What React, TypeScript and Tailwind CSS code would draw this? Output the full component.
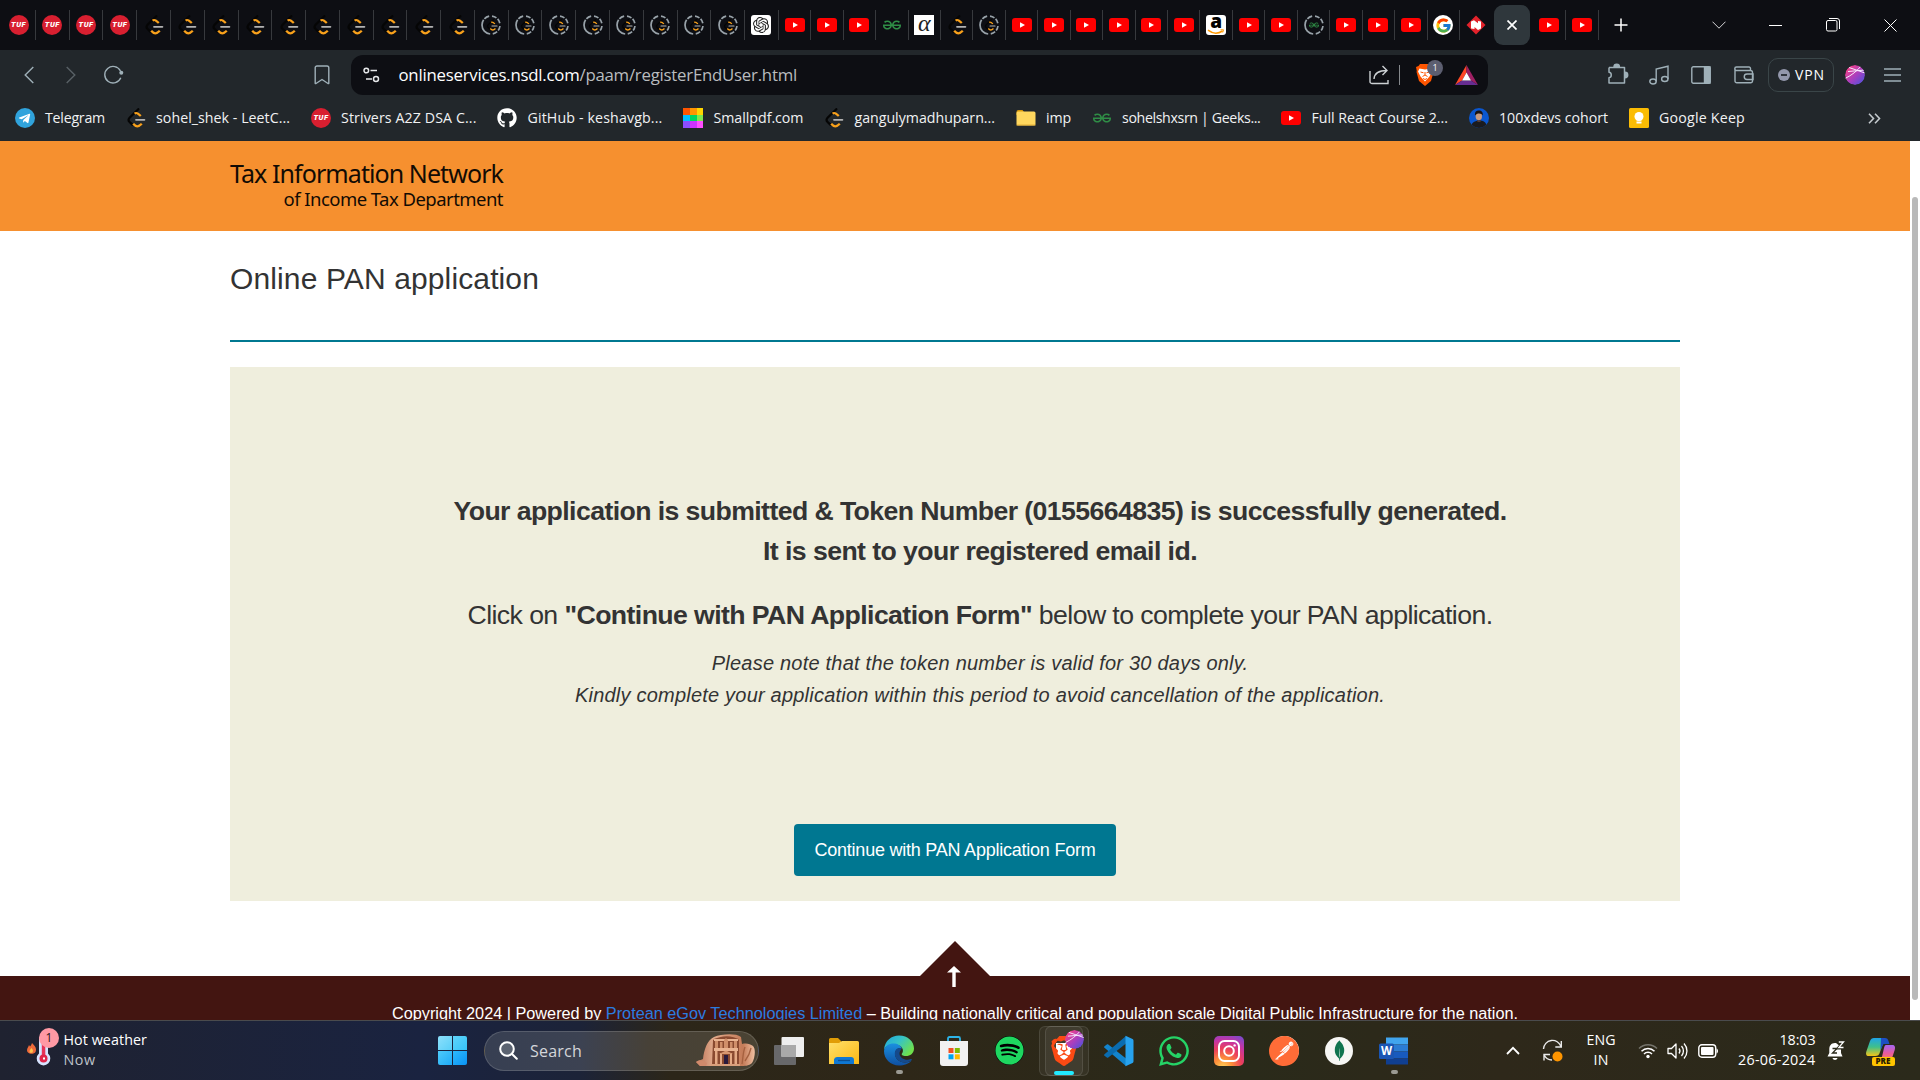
import React, { useLayoutEffect, useRef, useState } from "react";
import { SiBrave, SiGeeksforgeeks, SiMongodb, SiOpenai, SiPostman } from "react-icons/si";
import { FaGithub, FaSpotify, FaTelegramPlane, FaWhatsapp } from "react-icons/fa";
import { FcGoogle } from "react-icons/fc";

/* One line of text whose tracking is adjusted so that it spans `width` pixels. */
function Fit({ width, className = "", children }: { width: number; className?: string; children: React.ReactNode }) {
  const ref = useRef<HTMLSpanElement>(null);
  const [spacing, setSpacing] = useState(0);
  useLayoutEffect(() => {
    const el = ref.current;
    if (!el) return;
    const previous = el.style.letterSpacing;
    el.style.letterSpacing = "0px";
    const natural = el.getBoundingClientRect().width;
    el.style.letterSpacing = previous;
    setSpacing((width - natural) / (el.textContent || " ").length);
  }, [width]);
  return (
    <span ref={ref} className={`inline-block shrink-0 whitespace-nowrap ${className}`} style={{ letterSpacing: spacing }}>
      {children}
    </span>
  );
}

/* ---------- site icons ---------- */

function LeetCode({ size = 20 }: { size?: number }) {
  return (
    <svg width={size} height={size} viewBox="0 0 20 20" fill="none" strokeLinecap="round" className="shrink-0">
      <path d="M12.300 1.200 3.600 9.800c-1.400 1.400-1.400 2.800 0 4.200L6.300 16.600" stroke="#050505" strokeWidth="2.300" />
      <path d="M8.600 5.600c1.900-1.500 3.300-.6 6.200 2.500" stroke="#f9a11b" strokeWidth="2.200" strokeLinecap="butt" />
      <path d="M7.200 15.800c2.800 3.400 5.400 3.200 8.600 0" stroke="#f9a11b" strokeWidth="2.300" strokeLinecap="butt" />
      <path d="M10 11.800h8.400" stroke="#b3b3b3" strokeWidth="1.800" />
    </svg>
  );
}

function Tuf() {
  return (
    <span className="flex size-5 shrink-0 items-center justify-center rounded-full bg-[#d81f30] font-['Roboto',sans-serif] text-[7.500px] leading-none font-black tracking-[0.6px] text-white italic">
      TUF
    </span>
  );
}

function YouTube() {
  return (
    <svg width="20" height="20" viewBox="0 0 20 20" className="shrink-0">
      <rect x="0" y="3" width="20" height="14" rx="3" fill="#f00" />
      <path d="M8 7.200v5.600l5-2.800z" fill="#fff" />
    </svg>
  );
}

function Ring({ children }: { children: React.ReactNode }) {
  return (
    <span className="relative flex size-5 shrink-0 items-center justify-center">
      <svg width="20" height="20" viewBox="0 0 20 20" fill="none" stroke="#98a2a9" strokeWidth="1.700" className="absolute inset-0">
        <path d="M9.200 19A9 9 0 0 1 1 10" />
        <path d="M1 10A9 9 0 0 1 9.200 1" strokeDasharray="5.500 1.200" />
        <path d="M11 1.050A9 9 0 0 1 18.950 9" strokeDasharray="4.800 1.500" />
        <path d="M18.950 11A9 9 0 0 1 11 18.950" strokeDasharray="4.800 1.500" />
      </svg>
      {children}
    </span>
  );
}

function Gfg({ size = 18 }: { size?: number }) {
  return <SiGeeksforgeeks size={size} color="#2f8d46" className="shrink-0" />;
}

function ChatGpt() {
  return (
    <span className="flex size-5 shrink-0 items-center justify-center rounded-[3px] bg-white">
      <SiOpenai size={16} color="#222" />
    </span>
  );
}

function Alpha() {
  return (
    <span className="flex size-5 shrink-0 items-center justify-center bg-white pb-1 font-['Liberation_Serif',serif] text-[24px] leading-none text-[#222] italic">
      α
    </span>
  );
}

function Amazon() {
  return (
    <span className="relative flex size-5 shrink-0 justify-center rounded-[3px] bg-white">
      <span className="mt-[-3px] font-['Open_Sans',sans-serif] text-[19px] leading-[19px] font-extrabold text-black">a</span>
      <svg width="18" height="6" viewBox="0 0 18 6" fill="none" className="absolute bottom-0 left-px">
        <path d="M1 1.200c5 3.800 10 3.700 14.500.8" stroke="#f90" strokeWidth="1.500" />
        <path d="M13.500.8h3l-.8 2.700" stroke="#f90" strokeWidth="1" />
      </svg>
    </span>
  );
}

function Google() {
  return (
    <span className="flex size-5 shrink-0 items-center justify-center rounded-full bg-white">
      <FcGoogle size={17} />
    </span>
  );
}

function Nsdl() {
  return (
    <svg width="20" height="20" viewBox="0 0 20 20" className="shrink-0">
      <path d="M10 .5 19.500 10 10 19.500.5 10z" fill="#e3222b" />
      <path d="M5 6.500 8 5.200l4 3V6l3 .5v7L12 15l-3.500-3v2L5 13.500z" fill="#fff" />
    </svg>
  );
}

function Smallpdf() {
  const colors = ["bg-[#ff5500]", "bg-[#ff9500]", "bg-[#ffd500]", "bg-[#00bfff]", "bg-[#00d563]", "bg-[#80e64d]", "bg-[#8c4dff]", "bg-[#cc33ff]", "bg-[#ff4dff]"];
  return (
    <span className="grid size-5 shrink-0 grid-cols-3 grid-rows-3">
      {colors.map((c) => (
        <span key={c} className={c} />
      ))}
    </span>
  );
}

function Folder() {
  return (
    <svg width="20" height="20" viewBox="0 0 20 20" className="shrink-0">
      <path d="M.5 4A2 2 0 0 1 2.500 2h4l1.500 2v3H.5z" fill="#d99a0c" />
      <rect x=".5" y="3.500" width="19" height="14" rx="1.500" fill="#ffd75e" />
      <path d="M.5 17h19" stroke="#e2ae36" />
    </svg>
  );
}

function Avatar() {
  return (
    <svg width="20" height="20" viewBox="0 0 20 20" className="shrink-0">
      <clipPath id="avatar">
        <circle cx="10" cy="10" r="10" />
      </clipPath>
      <g clipPath="url(#avatar)">
        <rect width="20" height="20" fill="#0b57d0" />
        <path d="M2 20c0-5 3-7 8-7.500S18 15 18 20z" fill="#1b1b1f" />
        <ellipse cx="9.800" cy="8" rx="3.200" ry="4.300" fill="#c79a80" />
        <path d="M6 7.500C5.500 3.500 7.500 2.500 10 2.500s4.300 1.500 3.700 5c-1-2.500-5.500-3-7.700 0z" fill="#1a1312" />
        <path d="M8 11.500c1 1.500 3 1.500 4 0l-.5 2.500h-3z" fill="#5b3c30" />
      </g>
    </svg>
  );
}

function Keep() {
  return (
    <svg width="20" height="20" viewBox="0 0 20 20" className="shrink-0">
      <rect width="20" height="20" rx="1.500" fill="#fbbc04" />
      <circle cx="10" cy="8.500" r="4.500" fill="#fff" />
      <path d="M7.500 10h5v2.500h-5zM7.500 13.500h5v2h-5z" fill="#fff" />
    </svg>
  );
}

function Globe({ size = 20 }: { size?: number }) {
  return (
    <svg width={size} height={size} viewBox="0 0 20 20" className="shrink-0">
      <defs>
        <linearGradient id="globe" x1="0" y1="0" x2="1" y2="1">
          <stop offset=".15" stopColor="#f0418c" />
          <stop offset=".55" stopColor="#a63fc0" />
          <stop offset="1" stopColor="#3d55e0" />
        </linearGradient>
        <clipPath id="globeClip">
          <circle cx="10" cy="10" r="10" />
        </clipPath>
      </defs>
      <g clipPath="url(#globeClip)">
        <circle cx="10" cy="10" r="10" fill="url(#globe)" />
        <path d="M4 2.500 20 8M0 13.500C7 10 12 6 16 1M3 6.500 20 5" stroke="#f7e9ff" strokeWidth="1" fill="none" />
      </g>
    </svg>
  );
}

/* ---------- tab strip ---------- */

type SiteKey = "tuf" | "lc" | "lcr" | "gpt" | "yt" | "gfg" | "alpha" | "amazon" | "gfgr" | "google";

function Site({ kind }: { kind: SiteKey }) {
  switch (kind) {
    case "tuf":
      return <Tuf />;
    case "lc":
      return <LeetCode />;
    case "lcr":
      return (
        <Ring>
          <span className="pl-0.5">
            <LeetCode size={12} />
          </span>
        </Ring>
      );
    case "gpt":
      return <ChatGpt />;
    case "yt":
      return <YouTube />;
    case "gfg":
      return <Gfg />;
    case "alpha":
      return <Alpha />;
    case "amazon":
      return <Amazon />;
    case "gfgr":
      return (
        <Ring>
          <Gfg size={10} />
        </Ring>
      );
    case "google":
      return <Google />;
  }
}

const wideTabs: SiteKey[] = [
  "tuf", "tuf", "tuf", "tuf",
  "lc", "lc", "lc", "lc", "lc", "lc", "lc", "lc", "lc", "lc",
  "lcr", "lcr", "lcr", "lcr", "lcr", "lcr", "lcr", "lcr", "gpt",
];
const narrowTabs: SiteKey[] = [
  "yt", "yt", "yt", "gfg", "alpha", "lc", "lcr", "yt", "yt", "yt", "yt", "yt", "yt",
  "amazon", "yt", "yt", "gfgr", "yt", "yt", "yt", "google",
];

function TabStrip() {
  return (
    <div className="flex h-[50px] items-center bg-[#0d0e13] pl-[2.200px]">
      {wideTabs.map((k, i) => (
        <div key={i} className="flex h-[30px] w-[33.770px] shrink-0 items-center justify-center border-r border-[#37393d]">
          <Site kind={k} />
        </div>
      ))}
      {narrowTabs.map((k, i) => (
        <div key={i} className="flex h-[30px] w-[32.450px] shrink-0 items-center justify-center border-r border-[#37393d]">
          <Site kind={k} />
        </div>
      ))}
      <div className="flex w-[34.200px] shrink-0 justify-center pr-[3px]">
        <Nsdl />
      </div>
      <div className="flex h-10 w-9 shrink-0 items-center justify-center rounded-[9px] bg-[#2f373c]">
        <svg width="10" height="10" viewBox="0 0 10 10" stroke="#fff" strokeWidth="1.700">
          <path d="M.5.5l9 9M9.500.5l-9 9" />
        </svg>
      </div>
      <div className="ml-[2.500px] flex h-[30px] w-[33px] shrink-0 items-center justify-center border-r border-[#37393d]">
        <YouTube />
      </div>
      <div className="flex h-[30px] w-[33px] shrink-0 items-center justify-center border-r border-[#37393d]">
        <YouTube />
      </div>
      <svg width="14" height="14" viewBox="0 0 14 14" stroke="#fff" strokeWidth="1.500" className="ml-[15px] shrink-0">
        <path d="M7 .5v13M.5 7h13" />
      </svg>
      <div className="ml-[62.800px] flex items-center">
        <div className="flex w-[57px] justify-center">
          <svg width="14" height="8" viewBox="0 0 14 8" fill="none" stroke="#d5d5d7">
            <path d="M.5.7 7 7.200 13.500.7" />
          </svg>
        </div>
        <div className="flex w-[57px] justify-center">
          <span className="h-px w-[13px] bg-white" />
        </div>
        <div className="flex w-[57px] justify-center">
          <svg width="14" height="14" viewBox="0 0 14 14" fill="none" stroke="#fff">
            <rect x=".5" y="2.500" width="10.500" height="10.500" rx="1.500" />
            <path d="M3 .5h8a2.500 2.500 0 0 1 2.500 2.500v8" />
          </svg>
        </div>
        <div className="flex w-[59px] justify-center">
          <svg width="13" height="13" viewBox="0 0 13 13" stroke="#fff">
            <path d="M.5.5l12 12M12.500.5l-12 12" />
          </svg>
        </div>
      </div>
    </div>
  );
}

/* ---------- toolbar ---------- */

function Toolbar() {
  return (
    <div className="flex h-[50px] items-center text-[#9fb0b8]">
      <div className="flex w-[58px] shrink-0 justify-center">
        <svg width="10" height="18" viewBox="0 0 10 18" fill="none" stroke="currentColor" strokeWidth="1.400">
          <path d="M9.300 1 1.200 9l8.100 8" />
        </svg>
      </div>
      <div className="flex w-[26px] shrink-0 justify-center text-[#596166]">
        <svg width="10" height="18" viewBox="0 0 10 18" fill="none" stroke="currentColor" strokeWidth="1.400">
          <path d="M.7 1l8.100 8-8.100 8" />
        </svg>
      </div>
      <div className="flex w-[58px] shrink-0 justify-center pl-px">
        <svg width="20" height="20" viewBox="0 0 20 20" fill="none" stroke="currentColor" strokeWidth="1.400">
          <path d="M16.800 12.800A8.300 8.300 0 1 1 16.500 6" />
          <circle cx="17.300" cy="7.800" r="2" fill="currentColor" stroke="none" />
        </svg>
      </div>
      <div className="ml-40 flex w-10 shrink-0 justify-center">
        <svg width="16" height="20" viewBox="0 0 16 20" fill="none" stroke="currentColor" strokeWidth="1.400" strokeLinejoin="round">
          <path d="M3 1h10a1.800 1.800 0 0 1 1.800 1.800V18.200c0 .5-.4.600-.8.300L8 14.500l-6 4c-.4.300-.8.200-.8-.3V2.800A1.800 1.800 0 0 1 3 1z" />
        </svg>
      </div>
      <div className="ml-[9px] flex h-10 w-[1137px] shrink-0 items-center rounded-xl bg-[#0d0e13]">
        <svg width="17" height="16" viewBox="0 0 17 16" fill="none" stroke="#e6e8ea" strokeWidth="1.500" className="ml-3 shrink-0">
          <circle cx="3.300" cy="3.500" r="2.300" />
          <path d="M7.500 3.500H14M3 12h6" />
          <circle cx="13" cy="12" r="2.500" />
        </svg>
        <Fit width={398.500} className="ml-[18.500px] pb-px font-['Open_Sans',sans-serif] text-[16.800px] leading-6 text-[#b9bcbf]">
          <span className="text-white">onlineservices.nsdl.com</span>/paam/registerEndUser.html
        </Fit>
        <svg width="20" height="20" viewBox="0 0 20 20" fill="none" stroke="#cdd1d4" strokeWidth="1.400" className="ml-auto shrink-0">
          <path d="M1 6v10.500A1.800 1.800 0 0 0 2.800 18.500H19V15" />
          <path d="M5 14c.3-5.500 4-8.500 13-8.500M13.500 1 18 5.500 13.500 10" />
        </svg>
        <span className="ml-[10px] h-5 w-px bg-[#85888c]" />
        <span className="relative ml-[15px] flex h-[22px] w-5 items-center justify-center">
          <svg width="20" height="22" viewBox="0 0 20 22" className="absolute inset-0">
            <path d="M5 0h10l1.500 2 2.500 1-.8 4 .3 1-2.500 9L10 22l-6-5L1.500 8l.3-1L1 3l2.500-1z" fill="#ff5500" />
            <path d="M4.500 4.500 10 5.500l5.500-1 1.500 3-2.500 5-4.500 5-4.500-5-2.500-5z" fill="#fff" />
            <path d="M5.500 8l3 .8M14.500 8l-3 .8M7.500 12.500 10 11l2.500 1.500M10 8v3M8 14.500l2 1 2-1" stroke="#ff5500" strokeWidth="1" fill="none" />
          </svg>
          <span className="absolute -top-[4px] left-[12px] flex h-4 w-4 items-center justify-center rounded-full bg-[#5c5e70] font-['Open_Sans',sans-serif] text-[9px] text-white">1</span>
        </span>
        <svg width="23" height="20" viewBox="0 0 23 20" className="mr-[10px] ml-5 shrink-0">
          <path d="M11.500 0 0 20l7-4.500 4.500-8z" fill="#ff4724" />
          <path d="M11.500 0 23 20l-7-4.500-4.500-8z" fill="#9e1f63" />
          <path d="M0 20h23l-7-4.500H7z" fill="#662d91" />
          <path d="M11.500 7.500 7 15.500h9z" fill="#fff" />
        </svg>
      </div>
      <div className="ml-[109px] flex w-[42px] shrink-0 justify-center">
        <svg width="22" height="22" viewBox="0 0 22 22" fill="none" stroke="currentColor" strokeWidth="1.500" className="relative -top-px">
          <path d="M2 4.500h15.500V9.300M17.500 14.700V20H2v-5.300c3-.3 3-5.100 0-5.400V4.500M17.500 9v6" strokeLinejoin="round" />
          <path d="M7 4a2.700 2.700 0 0 1 5.400 0zM18 9.300a2.700 2.700 0 0 1 0 5.400z" fill="currentColor" />
        </svg>
      </div>
      <div className="flex w-[41px] shrink-0 justify-center pr-px">
        <svg width="20" height="20" viewBox="0 0 20 20" fill="none" stroke="currentColor" strokeWidth="1.400">
          <ellipse cx="4" cy="16.500" rx="3.200" ry="2.500" />
          <ellipse cx="15.800" cy="14" rx="3.200" ry="2.500" />
          <path d="M7.200 16.500V4L19 1.200V14" />
        </svg>
      </div>
      <div className="flex w-[43px] shrink-0 justify-center pr-px">
        <svg width="20" height="18" viewBox="0 0 20 18" fill="none" stroke="currentColor" strokeWidth="1.400">
          <rect x=".8" y=".8" width="18.400" height="16.400" rx="1.500" />
          <path d="M13.500 1h5.500v16h-5.500z" fill="currentColor" />
        </svg>
      </div>
      <div className="flex w-[42px] shrink-0 justify-center">
        <svg width="20" height="18" viewBox="0 0 20 18" fill="none" stroke="currentColor" strokeWidth="1.400">
          <path d="M16.500 4.500V2.500A1.500 1.500 0 0 0 15 1H2.500a1.600 1.600 0 0 0 0 3.500h14A2 2 0 0 1 18.500 6.500v8.500a1.800 1.800 0 0 1-1.800 1.800H2.800A1.800 1.800 0 0 1 1 15V2.500" />
          <path d="M19 8h-6a2.500 2.500 0 0 0 0 5.500h6z" />
        </svg>
      </div>
      <div className="ml-[3px] flex h-[34px] w-[66px] shrink-0 items-center rounded-[10px] border border-[#3a4548] pl-[9px] text-white">
        <span className="flex size-3 items-center justify-center rounded-full bg-[#9397ab]">
          <span className="h-[2px] w-[6px] bg-[#30343c]" />
        </span>
        <Fit width={30} className="ml-[5px] font-['Open_Sans',sans-serif] text-[14px] leading-5">
          VPN
        </Fit>
      </div>
      <div className="flex w-[42px] shrink-0 justify-center">
        <Globe />
      </div>
      <div className="flex w-8 shrink-0 justify-center">
        <svg width="17" height="14" viewBox="0 0 17 14" stroke="currentColor" strokeWidth="1.300">
          <path d="M0 1h17M0 7h17M0 13h17" />
        </svg>
      </div>
    </div>
  );
}

const bookmarks: { icon: React.ReactNode; label: string; width: number }[] = [
  { icon: <span className="flex size-5 shrink-0 items-center justify-center rounded-full bg-[#30a3dc] pr-0.5"><FaTelegramPlane size={13} color="#fff" /></span>, label: "Telegram", width: 60 },
  { icon: <LeetCode />, label: "sohel_shek - LeetC...", width: 134 },
  { icon: <Tuf />, label: "Strivers A2Z DSA C...", width: 135.500 },
  { icon: <FaGithub size={20} color="#fff" className="shrink-0" />, label: "GitHub - keshavgb...", width: 135 },
  { icon: <Smallpdf />, label: "Smallpdf.com", width: 90 },
  { icon: <LeetCode />, label: "gangulymadhuparn...", width: 140.500 },
  { icon: <Folder />, label: "imp", width: 25 },
  { icon: <Gfg size={18} />, label: "sohelshxsrn | Geeks...", width: 138.500 },
  { icon: <YouTube />, label: "Full React Course 2...", width: 136.500 },
  { icon: <Avatar />, label: "100xdevs cohort", width: 109 },
  { icon: <Keep />, label: "Google Keep", width: 86 },
];

function BookmarksBar() {
  return (
    <div className="flex h-[41px] items-center gap-[21px] pb-[5px] pl-[15px]">
      {bookmarks.map((b) => (
        <div key={b.label} className="flex shrink-0 items-center gap-[10px]">
          <span className="flex w-5 justify-center">{b.icon}</span>
          <Fit width={b.width} className="font-['Open_Sans',sans-serif] text-[14.200px] leading-5 text-[#f1f2f3]">
            {b.label}
          </Fit>
        </div>
      ))}
      <svg width="13" height="11" viewBox="0 0 13 11" fill="none" stroke="#c3c9cd" strokeWidth="1.600" className="mr-[39px] ml-auto">
        <path d="M1 .8 5.500 5.500 1 10.200M7 .8l4.500 4.700L7 10.200" />
      </svg>
    </div>
  );
}

/* ---------- web page ---------- */

function Page() {
  return (
    <div className="flex h-[879px] overflow-hidden bg-white font-['Liberation_Sans',Arial,sans-serif] text-[#333]">
      <div className="w-[1910px] shrink-0">
        <header className="flex h-[90px] flex-col bg-[#f6902f] pt-[17px] pl-[230px] font-['Noto_Sans',sans-serif] text-[#120b04]">
          <div className="flex w-[273px] flex-col items-end">
            <Fit width={273} className="text-[25px] leading-[30px]">Tax Information Network</Fit>
            <Fit width={219.500} className="text-[18.500px] leading-[22px]">of Income Tax Department</Fit>
          </div>
        </header>
        <main className="mx-[230px]">
          <h1 className="h-[109px] pt-[29px] text-[30px] leading-[38px]">
            <Fit width={309}>Online PAN application</Fit>
          </h1>
          <div className="h-0.5 bg-[#007891]" />
          <section className="mt-[25px] flex h-[534px] flex-col items-center bg-[#efeedd]">
            <div className="ml-[50px] flex flex-col items-center pt-[124px]">
              <p className="flex flex-col items-center text-[26.670px] leading-10 font-bold">
                <Fit width={1053}>Your application is submitted &amp; Token Number (0155664835) is successfully generated.</Fit>
                <Fit width={434}>It is sent to your registered email id.</Fit>
              </p>
              <p className="mt-6 text-[26.670px] leading-10">
                <Fit width={1025}>
                  Click on <b>"Continue with PAN Application Form"</b> below to complete your PAN application.
                </Fit>
              </p>
              <p className="mt-3 flex flex-col items-center text-[20px] leading-8 italic">
                <Fit width={536.500}>Please note that the token number is valid for 30 days only.</Fit>
                <Fit width={810}>Kindly complete your application within this period to avoid cancellation of the application.</Fit>
              </p>
            </div>
            <button className="mt-auto mb-[25px] flex h-[52px] w-[322px] items-center justify-center rounded-[4px] bg-[#007791] text-[18px] text-white">
              <Fit width={281}>Continue with PAN Application Form</Fit>
            </button>
          </section>
        </main>
        <div className="mt-10 flex h-[35px] justify-center">
          <svg width="70" height="35" viewBox="0 0 70 35">
            <path d="M35 0 70 35H0z" fill="#431511" />
          </svg>
        </div>
        <footer className="flex h-40 flex-col items-center bg-[#431511] text-[16.300px] leading-6 text-white">
          <svg width="14" height="21" viewBox="0 0 14 21" className="relative -top-[10px] right-px shrink-0">
            <path d="M7 0 14 6.500H8.700V21H5.300V6.500H0z" fill="#fff" />
          </svg>
          <Fit width={1126} className="mt-[4px]">
            Copyright 2024 | Powered by <span className="text-[#2b7de0]">Protean eGov Technologies Limited</span> – Building nationally critical and population scale Digital Public Infrastructure for the nation.
          </Fit>
        </footer>
      </div>
      <div className="flex w-[10px] justify-center bg-white pt-14">
        <div className="h-[803px] w-[6px] rounded-full bg-[#b9b9b9]" />
      </div>
    </div>
  );
}

/* ---------- taskbar ---------- */

function Petra() {
  return (
    <svg width="60" height="34" viewBox="0 0 60 34" className="shrink-0">
      <defs>
        <linearGradient id="rock" x1="0" x2="1">
          <stop offset="0" stopColor="#b86f53" />
          <stop offset=".3" stopColor="#e2ab8c" />
          <stop offset=".8" stopColor="#c47b58" />
          <stop offset="1" stopColor="#f0c0a2" />
        </linearGradient>
      </defs>
      <path d="M0 28l7-3C8 16 11 6 18 3c7-3 22-4 27 0l1 7c5-1 8 0 11 2 3 3 2 12-1 17-3 3-8 3-11 3H4z" fill="url(#rock)" />
      <path d="M17 6c8-5 20-5 26 0v25H16z" fill="#8a4a30" />
      <path d="M18 5h24v2H18zM18 14h24v3H18z" fill="#e9b390" />
      <path d="M19 7h3v7h-3zM38 7h3v7h-3zM24 8h2.500v6H24zM34 8h2.500v6H34zM28 6l2-2 2 2v8h-4z" fill="#d08f6a" />
      <path d="M19 17h2.500v13H19zM24 19h2v11h-2zM34 19h2v11h-2zM38.500 17H41v13h-2.500z" fill="#e4aa85" />
      <path d="M28 21h4v9h-4z" fill="#2a1b3d" />
      <path d="M23 20l7-3.500L37 20z" fill="#d7966f" />
      <path d="M15 30h29v2H15z" fill="#d9a07c" />
      <path d="M49 13c-2 5-2 11-3 17M55 14c-1 5-3 9-6 13" stroke="#a5603f" strokeWidth="1.300" fill="none" />
      <path d="M0 28c3-3 7-2 11 1l-1 3H4z" fill="#d08a6c" />
    </svg>
  );
}

function Edge() {
  return (
    <svg width="30" height="31" viewBox="0 0 30 30" className="shrink-0">
      <defs>
        <linearGradient id="edgeTop" x1="0" y1="0" x2="1" y2=".6">
          <stop offset="0" stopColor="#1fa5dd" />
          <stop offset=".5" stopColor="#36c3c6" />
          <stop offset="1" stopColor="#6fe04c" />
        </linearGradient>
        <linearGradient id="edgeLeft" x1="0" y1="0" x2="0" y2="1">
          <stop offset="0" stopColor="#1a8fe0" />
          <stop offset="1" stopColor="#0f4fa0" />
        </linearGradient>
      </defs>
      <path d="M0 14C1 5 7.500 0 15 0c9 0 15 6 15 13 0 5-4 7.500-8 7.500-3.500 0-5-1.200-4-2.500 2-2.500 1-7-4-8.500C9 8 3 9 0 14z" fill="url(#edgeTop)" />
      <path d="M0 15.500C.5 10.500 5 8 9.500 8c4 0 7.500 2 8.500 5-3-1-6.500.5-7 4.500-.5 5 4 9.500 10 9.500 3 0 5-1 6.500-2C25 28.500 20 30 15 30 6.500 30 0 23.500 0 15.500z" fill="url(#edgeLeft)" />
      <path d="M18 13c-3.500-1.500-7 .5-7.200 4.500C10.500 23 15 27 21 27c2.500 0 5.500-1 6.500-2.200.6-1 .2-1.600-.8-1.200C22 25.500 16 23 15.500 18.500c-.2-2 1-4 2.500-5.500z" fill="#154a8c" />
    </svg>
  );
}

function Store() {
  return (
    <svg width="30" height="32" viewBox="0 0 30 32" className="shrink-0">
      <path d="M9 8V3.500C9 2.500 9.500 2 10.500 2h9c1 0 1.500.5 1.500 1.500V8" fill="none" stroke="#2db4e8" strokeWidth="1.800" />
      <path d="M1 6h28v22a3 3 0 0 1-3 3H4a3 3 0 0 1-3-3z" fill="#f1f1f1" />
      <path d="M9.500 13h5v5h-5z" fill="#f25022" />
      <path d="M15.800 13h5v5h-5z" fill="#7fba00" />
      <path d="M9.500 19.300h5v5h-5z" fill="#00a4ef" />
      <path d="M15.800 19.300h5v5h-5z" fill="#ffb900" />
    </svg>
  );
}

function BraveApp() {
  return (
    <span className="relative flex h-8 w-8 items-center justify-center">
      <span className="absolute top-[8px] left-[8px] h-[18px] w-4 rounded-b-full bg-white" />
      <SiBrave size={30} color="#fb4a14" className="relative" />
      <span className="absolute -top-[5px] left-[17px]">
        <Globe size={19} />
      </span>
    </span>
  );
}

function VsCode() {
  return (
    <svg width="30" height="32" viewBox="0 0 30 32" className="shrink-0">
      <path d="M.5 11.300 2.800 9.500c.5-.4 1-.4 1.500 0L22 23.500V31L.5 12.800c-.6-.5-.6-1 0-1.500z" fill="#1384cd" />
      <path d="M.5 20.700 2.800 22.500c.5.400 1 .400 1.500 0L22 8.500V1L.5 19.200c-.6.5-.6 1 0 1.500z" fill="#0a6cb0" />
      <path d="M21.500.7 28.500 4c.6.300 1 1 1 1.700v20.600c0 .7-.4 1.400-1 1.700l-7 3.300z" fill="#27a2ee" />
    </svg>
  );
}

function Instagram() {
  return (
    <span className="flex size-[30px] items-center justify-center rounded-[5px] bg-[radial-gradient(circle_at_30%_105%,#ffd35a_0%,#fd8d3a_25%,#ec3f5b_50%,#c534a4_72%,#6a4fd6_100%)]">
      <svg width="22" height="22" viewBox="0 0 22 22" fill="none" stroke="#fff" strokeWidth="2">
        <rect x="1" y="1" width="20" height="20" rx="5.500" />
        <circle cx="11" cy="11" r="4.800" />
        <circle cx="16.600" cy="5.400" r="1.200" fill="#fff" stroke="none" />
      </svg>
    </span>
  );
}

function Word() {
  return (
    <svg width="30" height="30" viewBox="0 0 30 30" className="shrink-0">
      <path d="M7 1.500h22v7H7z" fill="#41a5ee" />
      <path d="M7 8.500h22v7H7z" fill="#2b7cd3" />
      <path d="M7 15.500h22v7H7z" fill="#185abd" />
      <path d="M7 22.500h22v6H7z" fill="#103f91" />
      <rect x="0" y="7.500" width="15" height="15.500" rx="1.500" fill="#1a56b4" />
      <text x="7.500" y="19.300" textAnchor="middle" fontFamily="Open Sans, sans-serif" fontWeight="700" fontSize="11.500" fill="#fff">W</text>
    </svg>
  );
}

function Explorer() {
  return (
    <svg width="30" height="30" viewBox="0 0 30 30" className="shrink-0">
      <defs>
        <linearGradient id="folder" x1="0" y1="0" x2="1" y2="1">
          <stop offset="0" stopColor="#ffe06b" />
          <stop offset="1" stopColor="#fcb913" />
        </linearGradient>
      </defs>
      <path d="M0 3.500A1.500 1.500 0 0 1 1.500 2H9l3 3v5H0z" fill="#e19d06" />
      <path d="M0 7h10l3-2h15.500A1.500 1.500 0 0 1 30 6.500V28H0z" fill="url(#folder)" />
      <path d="M5 28v-4.500A3 3 0 0 1 8 21h14a3 3 0 0 1 3 3V28z" fill="#0f78d4" />
      <path d="M9 24.500h12" stroke="#0b4f94" strokeWidth="1.300" />
    </svg>
  );
}

function Copilot() {
  return (
    <span className="relative flex h-[30px] w-[30px]">
      <svg width="30" height="26" viewBox="0 0 30 26">
        <defs>
          <linearGradient id="copA" x1="0" y1="0" x2="0" y2="1">
            <stop offset="0" stopColor="#1fa4e8" />
            <stop offset=".5" stopColor="#3fc08a" />
            <stop offset="1" stopColor="#f5c518" />
          </linearGradient>
          <linearGradient id="copB" x1="0" y1="0" x2="0" y2="1">
            <stop offset="0" stopColor="#a565f2" />
            <stop offset=".5" stopColor="#ea5b9c" />
            <stop offset="1" stopColor="#ff8a4c" />
          </linearGradient>
        </defs>
        <path d="M8 1h11l-5 14c-1 3-2 4-5 4H3c-3 0-3.500-2-2.500-5L4 4c.8-2 2-3 4-3z" fill="url(#copA)" />
        <path d="M15 1h4c2 0 3 1 3.500 3l1 3h-6l-3 6z" fill="#1d4fc4" />
        <path d="M20 8h6c3 0 3.500 2 2.700 5l-3 9c-.7 2-2 3-4 3H12c2 0 3-1 3.500-3l2.500-11c.5-2 1-3 2-3z" fill="url(#copB)" />
      </svg>
      <span className="absolute top-[20px] left-[6px] flex h-[9px] w-[23px] items-center justify-center rounded-[2px] bg-[#ffc400] font-['Open_Sans',sans-serif] text-[8px] font-extrabold text-[#2a1c00]">
        PRE
      </span>
    </span>
  );
}

type AppEntry = { icon: React.ReactNode; running?: boolean };

const appsBefore: AppEntry[] = [
  {
    icon: (
      <svg width="30" height="28" viewBox="0 0 30 28">
        <rect x="0" y="8" width="22" height="20" rx="1" fill="#68686a" />
        <rect x="7.500" y="0" width="22.500" height="20" rx="1" fill="#eee" />
        <path d="M7.500 8H22v12H7.500z" fill="#a9a9a9" />
      </svg>
    ),
  },
  { icon: <Explorer /> },
  { icon: <Edge />, running: true },
  { icon: <Store /> },
  { icon: <span className="flex size-[29px] rounded-full bg-black"><FaSpotify size={29} color="#1ed760" /></span> },
];

const appsAfter: AppEntry[] = [
  { icon: <VsCode /> },
  { icon: <FaWhatsapp size={34} color="#25d366" /> },
  { icon: <Instagram /> },
  {
    icon: (
      <span className="flex size-[29px] items-center justify-center rounded-full bg-white">
        <SiPostman size={30} color="#ff6c37" className="shrink-0" />
      </span>
    ),
  },
  {
    icon: (
      <span className="flex size-7 items-center justify-center rounded-full bg-[#f6f6f4]">
        <SiMongodb size={21} color="#10744f" />
      </span>
    ),
  },
  { icon: <Word />, running: true },
];

function AppCell({ icon, running }: AppEntry) {
  return (
    <div className="relative flex h-[50px] w-[55px] shrink-0 items-center justify-center">
      {icon}
      {running && <span className="absolute bottom-[2px] left-[24px] h-1 w-[7px] rounded-full bg-[#9b9a93]" />}
    </div>
  );
}

function Taskbar() {
  return (
    <div className="flex h-[60px] items-center border-t border-[#4a4b4d] bg-[linear-gradient(90deg,#1f2230_0px,#1a2340_420px,#1c2338_580px,#2c2619_670px,#2e2718_900px,#2a2a1a_1250px,#2e281a_1500px,#2b2a1b_1920px)] font-['Open_Sans',sans-serif] text-white">
      <div className="relative -top-px ml-[26px] h-[38px] w-[34px] shrink-0">
        <svg width="34" height="38" viewBox="0 0 34 38">
          <path d="M6 12c3 3 5 5 3.500 9-1 2-5.500 2.500-7.500.5-2.500-3 .5-5 1-7.500l1 1.500C5 14.500 5.500 13.500 6 12z" fill="#ee6a3a" />
          <path d="M5.500 17c1.500 1.500 2 3 .8 4.800H4c-1.200-1.500 0-3 1.500-4.800z" fill="#ffc44d" />
          <path d="M13 8a4.500 4.500 0 0 1 9 0v14.500a6.800 6.800 0 1 1-9 0z" fill="#d6e4ff" />
          <path d="M15.800 9h3.500v17h-3.500z" fill="#e63356" />
          <circle cx="17.500" cy="27.500" r="4" fill="#e0254a" />
          <path d="M17 26.500h2v2h-2z" fill="#fff" />
        </svg>
        <span className="absolute -top-[3px] left-[13px] flex size-5 items-center justify-center rounded-full bg-[#ff99a4] text-[12px] text-[#2a1518]">1</span>
      </div>
      <div className="ml-[3.500px] flex w-[120.500px] shrink-0 flex-col pb-[2px] text-[14.300px] leading-5">
        <Fit width={83.500} className="self-start">Hot weather</Fit>
        <Fit width={32} className="self-start text-[#bfc2c9]">Now</Fit>
      </div>
      <div className="ml-[254px] grid size-[29px] shrink-0 grid-cols-2 grid-rows-2 gap-px">
        <span className="rounded-tl-[2px] bg-[linear-gradient(135deg,#8de0fb,#59cff8)]" />
        <span className="rounded-tr-[2px] bg-[linear-gradient(135deg,#5fd4fa,#35c4f9)]" />
        <span className="rounded-bl-[2px] bg-[linear-gradient(135deg,#4dcbfa,#1fabf8)]" />
        <span className="rounded-br-[2px] bg-[linear-gradient(135deg,#2db9fb,#0a93f5)]" />
      </div>
      <div className="ml-[17px] flex h-10 w-[275px] shrink-0 items-center rounded-full border border-white/15 bg-[linear-gradient(90deg,#373f52_0%,#3c4252_35%,#474137_60%,#4a4333_100%)] pl-[14px]">
        <svg width="19" height="19" viewBox="0 0 19 19" fill="none" stroke="#fff" strokeWidth="2" strokeLinecap="round">
          <circle cx="8" cy="8" r="6.800" fill="#5b6371" />
          <path d="M13 13l4.800 4.800" />
        </svg>
        <Fit width={52} className="ml-[12px] text-[16px] leading-6 text-[#d4d6da]">Search</Fit>
        <span className="ml-auto pr-[2px]">
          <Petra />
        </span>
      </div>
      <div className="ml-[2.500px] flex shrink-0 items-center">
        {appsBefore.map((a, i) => (
          <AppCell key={i} {...a} />
        ))}
        <div className="relative flex h-[50px] w-[55px] shrink-0 items-center justify-center">
          <span className="absolute top-0 left-[8px] h-[50px] w-[44px] rounded-[6px] border border-white/10 bg-white/5" />
          <span className="absolute top-0 left-[2px] h-[50px] w-[44px] rounded-[6px] border border-white/10 bg-white/5" />
          <BraveApp />
          <span className="absolute bottom-[1px] left-[17px] h-1 w-5 rounded-full bg-[#22eaff]" />
        </div>
        {appsAfter.map((a, i) => (
          <AppCell key={i} {...a} />
        ))}
      </div>
      <svg width="14" height="9" viewBox="0 0 14 9" fill="none" stroke="#fff" strokeWidth="1.800" className="ml-[84.500px] shrink-0">
        <path d="M1 8 7 1.800 13 8" />
      </svg>
      <svg width="22" height="24" viewBox="0 0 22 24" fill="none" stroke="#e9e9e9" strokeWidth="1.400" className="ml-[22px] shrink-0">
        <path d="M1.500 10A9 9 0 0 1 19 7.500M19.300 2v6h-6M10 21a9 9 0 0 1-7.800-5M2 21.500V15.500h6" />
        <circle cx="15.500" cy="17.500" r="5" fill="#ff9500" stroke="none" />
      </svg>
      <div className="ml-[18.500px] flex w-[37px] shrink-0 flex-col items-center pb-px text-[14.200px] leading-5">
        <Fit width={29}>ENG</Fit>
        <Fit width={15}>IN</Fit>
      </div>
      <svg width="20" height="16" viewBox="0 0 20 16" fill="none" stroke="#fff" strokeWidth="1.500" className="ml-[18px] shrink-0">
        <path d="M1 5.500a12.500 12.500 0 0 1 18 0" stroke="#75746c" />
        <path d="M3.500 8.300a9 9 0 0 1 13 0M6 11a5.600 5.600 0 0 1 8 0" />
        <circle cx="10" cy="13.500" r="1.700" fill="#fff" stroke="none" />
      </svg>
      <svg width="21" height="18" viewBox="0 0 21 18" fill="none" stroke="#fff" strokeWidth="1.300" className="ml-[9.500px] shrink-0">
        <path d="M1 6.500h3.500L9 2v14l-4.500-4.500H1z" strokeLinejoin="round" />
        <path d="M12 6.500a4 4 0 0 1 0 5M14.500 4a7.500 7.500 0 0 1 0 10M17 1.500a11 11 0 0 1 0 15" />
      </svg>
      <svg width="21" height="14" viewBox="0 0 21 14" className="ml-[9.500px] shrink-0">
        <rect x=".8" y=".8" width="16.900" height="12.400" rx="3" fill="none" stroke="#fff" strokeWidth="1.400" />
        <rect x="3" y="3" width="12.500" height="8" rx="1" fill="#fff" />
        <path d="M18.500 4.500c2 .5 2 4.500 0 5z" fill="#fff" />
      </svg>
      <div className="ml-[16px] flex w-[81px] shrink-0 flex-col items-end pb-[2px] text-[14.300px] leading-5">
        <Fit width={36}>18:03</Fit>
        <Fit width={77.500}>26-06-2024</Fit>
      </div>
      <svg width="18" height="20" viewBox="0 0 18 20" className="ml-[11px] shrink-0">
        <path d="M8 2C4 2 2.300 5 2.300 8v4L.5 15.500h15L14 12V6L9 2z" fill="#fff" />
        <path d="M5.500 17h5c-.5 2.500-4.500 2.500-5 0z" fill="#fff" />
        <path d="M5.500 7.500h4.500l-4.500 4.500H10" stroke="#2b2a1b" strokeWidth="1.300" fill="none" />
        <path d="M11.500 1h5l-5 6h5" stroke="#2b2a1b" strokeWidth="3" fill="none" />
        <path d="M11.800 1h4.700l-4.700 5.500h4.700" stroke="#fff" strokeWidth="1.300" fill="none" />
      </svg>
      <div className="mt-[2px] ml-[21px] shrink-0">
        <Copilot />
      </div>
    </div>
  );
}

export default function App() {
  return (
    <div className="h-[1080px] w-[1920px] overflow-hidden bg-white">
      <div className="h-[141px] bg-[#22272b]">
        <TabStrip />
        <Toolbar />
        <BookmarksBar />
      </div>
      <Page />
      <Taskbar />
    </div>
  );
}
